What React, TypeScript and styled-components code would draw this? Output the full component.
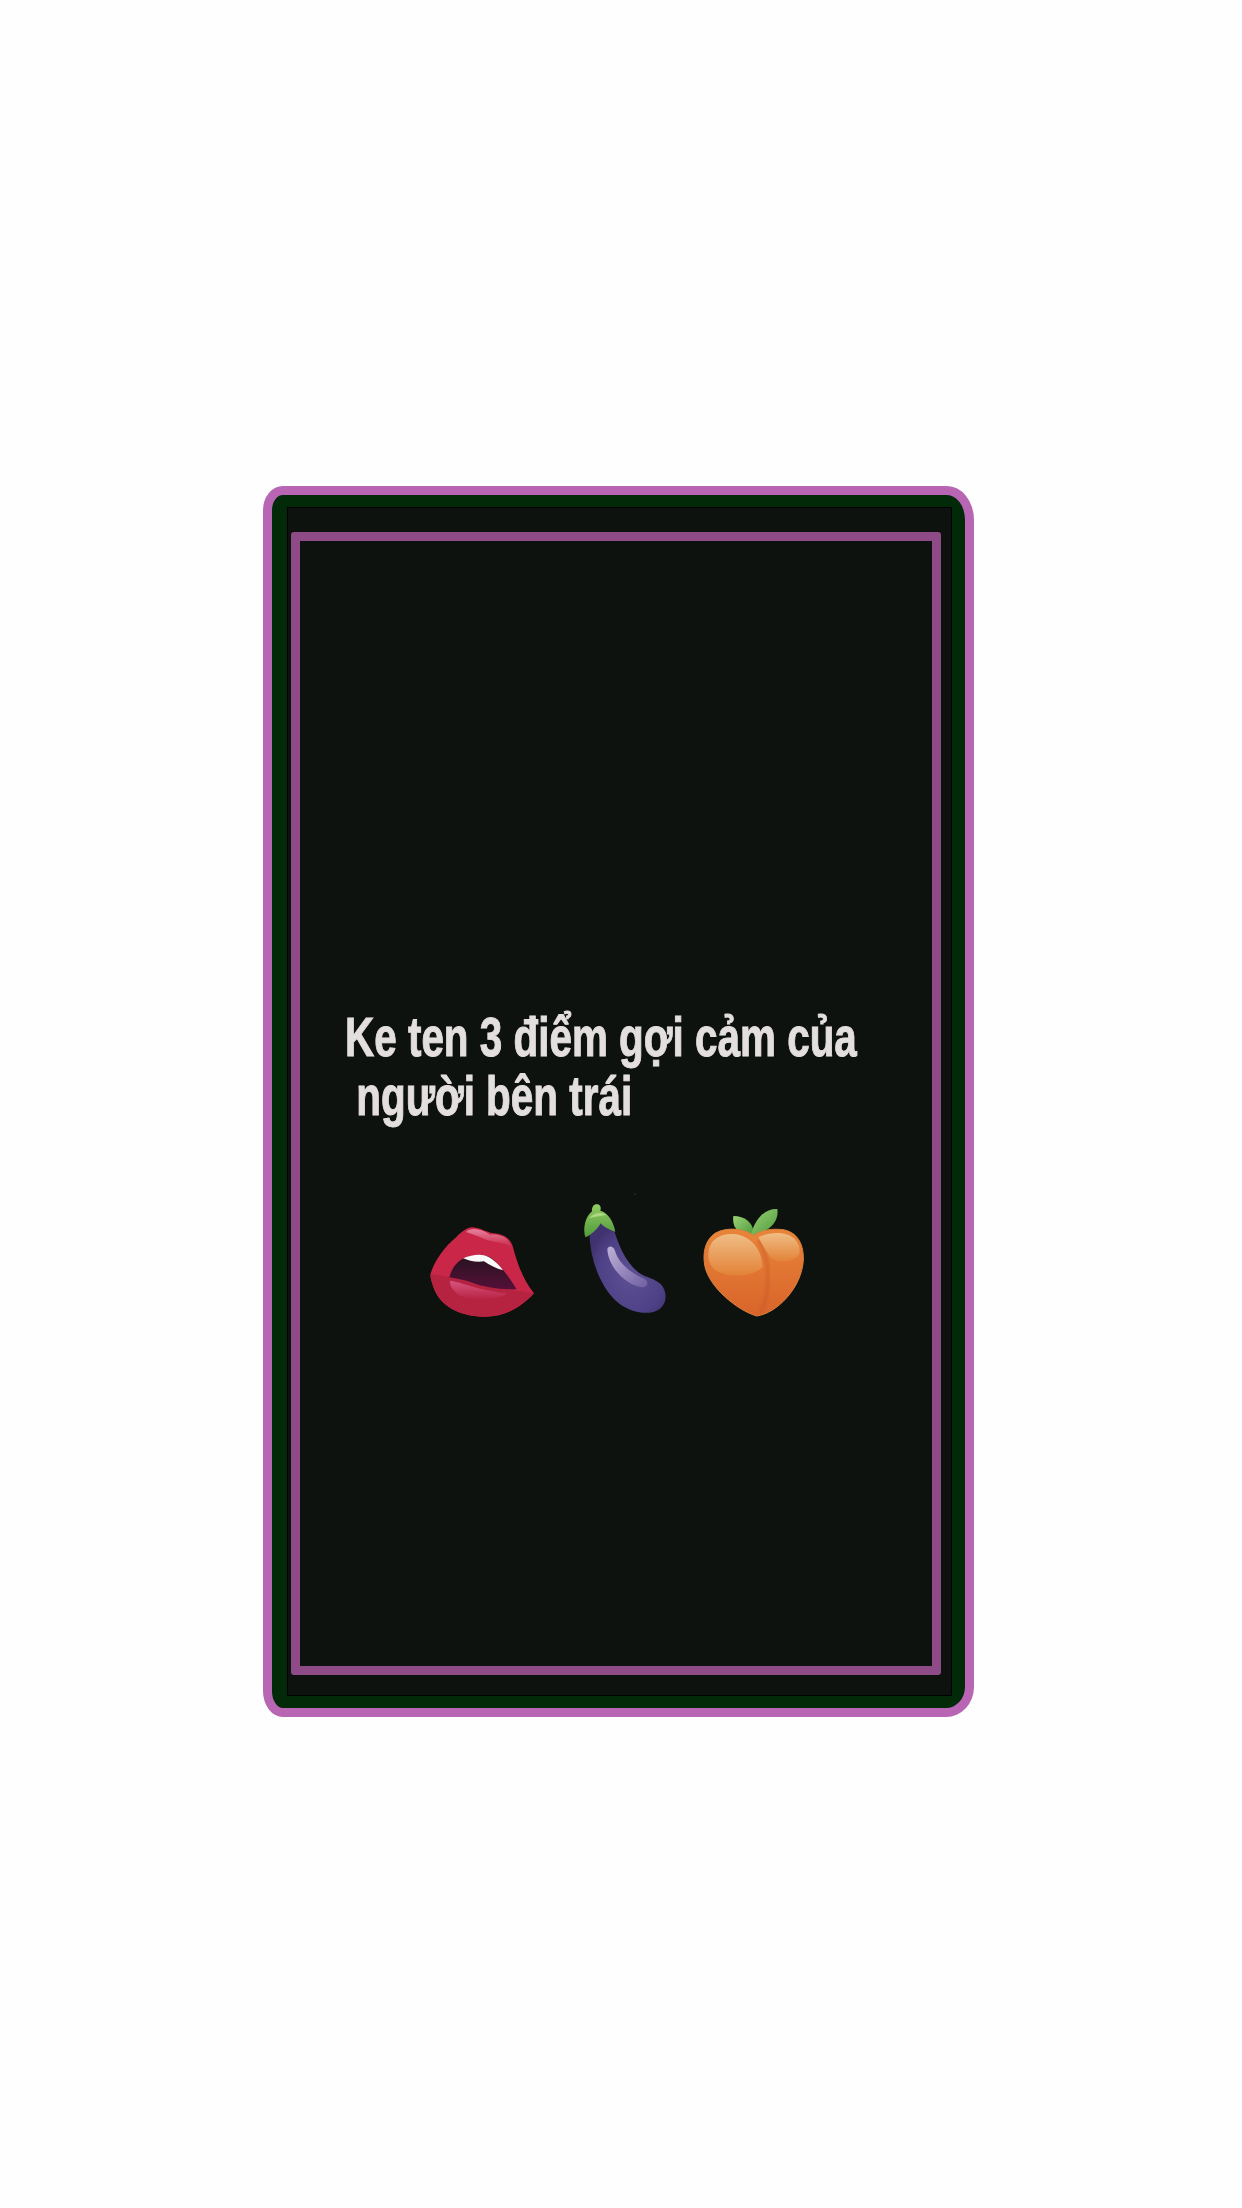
import * as React from "react";
import styled, { createGlobalStyle } from "styled-components";

const GlobalStyle = createGlobalStyle`
    html, body {
        margin: 0;
        padding: 0;
        background: #fefefe;
    }
`;

const Page = styled.div`
    width: 1242px;
    height: 2208px;
    padding: 486px 0 0 263px;
    box-sizing: border-box;
    overflow: hidden;
    background: #fefefe;
`;

const PhoneFrame = styled.div`
    width: 711px;
    height: 1231px;
    box-sizing: border-box;
    padding: 12px 13px 12px 15px;
    background: #022a08;
    border: 9px solid #b866b4;
    border-radius: 20px 27px 28px 20px / 24px 34px 30px 26px;
`;

const Screen = styled.div`
    height: 100%;
    box-sizing: border-box;
    padding: 24px 10px 20px 3px;
    background: #0d120e;
    border: 1px solid #000;
`;

const Card = styled.div`
    height: 100%;
    box-sizing: border-box;
    padding: 466px 0 0 45px;
    border: 9px solid #8e4b87;
    border-radius: 3px;
`;

// no brush font here, so Liberation Sans squeezed to the same line width
const Question = styled.div`
    font-family: "Liberation Sans", Arial, sans-serif;
    font-size: 56px;
    font-weight: 700;
    line-height: 59px;
    color: #e4dfdf;
    white-space: pre;
    -webkit-text-stroke: 1px #e4dfdf;
    transform: scaleX(0.722);
    transform-origin: left center;
`;

const EmojiRow = styled.div`
    display: flex;
    gap: 10px;
    margin: 65px 0 0 65px;
`;

const Emoji = styled.svg<{ $w: number }>`
    display: block;
    flex: none;
    width: ${props => props.$w}px;
    height: 150px;
`;

const Lips = () => (
    <Emoji $w={150} viewBox="0 0 450 450">
        <defs>
            <linearGradient id="mouth" x1="0" y1="0" x2="0" y2="1">
                <stop offset="0" stopColor="#24141f" />
                <stop offset="1" stopColor="#560f38" />
            </linearGradient>
            <linearGradient id="lipLow" x1="0" y1="0" x2="0" y2="1">
                <stop offset="0" stopColor="#d6557f" />
                <stop offset="1" stopColor="#b82342" />
            </linearGradient>
            <linearGradient id="lipTop" x1="0" y1="0" x2="0" y2="1">
                <stop offset="0" stopColor="#e5829d" />
                <stop offset="1" stopColor="#ca2748" />
            </linearGradient>
        </defs>
        <path
            d="M62 250 C75 210 105 170 135 145 C150 130 170 110 190 112 C210 114 228 126 250 130 C280 132 300 145 308 168 C318 205 335 265 372 310 C340 345 290 382 220 380 C150 378 90 350 70 290 C65 275 60 262 62 250 Z"
            fill="#ca2748"
        />
        <path
            d="M62 252 C90 258 140 260 190 282 C240 298 320 298 372 310 C340 345 290 382 220 380 C150 378 90 350 70 290 C65 275 60 262 62 252 Z"
            fill="#b52341"
        />
        <path
            d="M118 262 C125 235 140 215 162 205 C190 195 225 190 245 205 C275 230 300 265 320 298 C270 300 215 290 190 280 C165 270 140 265 118 262 Z"
            fill="url(#mouth)"
        />
        <path
            d="M160 205 C180 196 205 192 222 196 C245 202 265 222 279 241 C260 236 238 226 222 214 C200 218 175 212 160 205 Z"
            fill="#fafafa"
        />
        <path
            d="M120 272 C150 275 195 298 290 310 C285 322 225 335 175 325 C140 318 118 295 120 272 Z"
            fill="url(#lipLow)"
        />
        <path
            d="M168 126 C185 110 215 118 240 134 C265 132 295 138 305 172 C280 155 250 158 225 148 C205 138 185 132 168 126 Z"
            fill="url(#lipTop)"
        />
    </Emoji>
);

const Eggplant = () => (
    <Emoji $w={110} viewBox="0 0 330 450">
        <defs>
            <radialGradient id="eggBody" cx="0.55" cy="0.6" r="0.6">
                <stop offset="0" stopColor="#5d5092" />
                <stop offset="0.7" stopColor="#4f4187" />
                <stop offset="1" stopColor="#40326f" />
            </radialGradient>
            <linearGradient id="eggShine" x1="0" y1="0" x2="1" y2="1">
                <stop offset="0" stopColor="#bdb1d6" />
                <stop offset="1" stopColor="#6f5fa2" />
            </linearGradient>
            <linearGradient id="eggLeaf" x1="0" y1="0" x2="0" y2="1">
                <stop offset="0" stopColor="#94cc62" />
                <stop offset="1" stopColor="#4f9a3c" />
            </linearGradient>
        </defs>
        <circle cx="195" cy="12" r="2.5" fill="#3c3a3a" />
        <path
            d="M58 130 C60 200 85 280 135 330 C165 360 215 375 250 366 C290 355 298 310 272 282 C255 268 235 262 222 257 C175 235 145 170 128 105 L90 90 Z"
            fill="url(#eggBody)"
        />
        <path
            d="M112 178 C115 165 130 168 135 182 C145 220 185 250 225 268 C238 278 232 292 215 292 C170 285 115 235 112 178 Z"
            fill="url(#eggShine)"
        />
        <path
            d="M46 142 C38 115 45 82 66 64 C64 48 74 40 84 43 C92 46 94 54 91 62 C115 68 130 95 136 125 C120 120 102 112 92 100 C84 115 65 135 46 142 Z"
            fill="url(#eggLeaf)"
        />
        <path d="M58 85 C70 68 95 65 108 75 C90 78 72 80 58 85 Z" fill="#aed982" />
    </Emoji>
);

const Peach = () => (
    <Emoji $w={130} viewBox="0 0 390 450">
        <defs>
            <linearGradient id="peachBody" x1="0" y1="0" x2="0" y2="1">
                <stop offset="0" stopColor="#e8853a" />
                <stop offset="1" stopColor="#d9642a" />
            </linearGradient>
            <linearGradient id="peachShine" x1="0" y1="0" x2="0" y2="1">
                <stop offset="0" stopColor="#efbd85" />
                <stop offset="1" stopColor="#e38238" />
            </linearGradient>
            <linearGradient id="peachLeaf" x1="0" y1="0" x2="1" y2="1">
                <stop offset="0" stopColor="#9bd273" />
                <stop offset="1" stopColor="#4d9a3e" />
            </linearGradient>
            <filter id="soft">
                <feGaussianBlur stdDeviation="5" />
            </filter>
        </defs>
        <path d="M130 78 C165 78 188 98 190 124 L178 138 C140 128 126 110 130 78 Z" fill="url(#peachLeaf)" />
        <path d="M186 125 C198 82 228 55 262 57 C268 95 238 128 178 138 Z" fill="url(#peachLeaf)" />
        <path
            d="M190 136 C160 115 110 110 75 130 C45 150 38 190 44 225 C55 290 140 360 200 378 C260 370 335 295 340 210 C342 155 315 118 265 118 C235 116 210 124 190 136 Z"
            fill="url(#peachBody)"
            stroke="#d9803e"
            strokeWidth="3"
        />
        <path d="M205 150 C245 215 240 300 214 368" fill="none" stroke="#c2542a" strokeWidth="10" opacity="0.45" filter="url(#soft)" />
        <path
            d="M55 195 C55 150 90 130 130 132 C175 135 215 170 218 232 C190 258 120 268 75 240 C62 228 55 215 55 195 Z"
            fill="url(#peachShine)"
        />
        <path
            d="M205 142 C235 126 290 122 315 148 C330 165 332 185 325 198 C300 220 260 220 240 200 C225 180 215 160 205 142 Z"
            fill="url(#peachShine)"
        />
    </Emoji>
);

const App: React.FC = () => (
    <>
        <GlobalStyle />
        <Page>
            <PhoneFrame>
                <Screen>
                    <Card>
                        <Question>{"Ke ten 3 điểm gợi cảm của\n người bên trái"}</Question>
                        <EmojiRow>
                            <Lips />
                            <Eggplant />
                            <Peach />
                        </EmojiRow>
                    </Card>
                </Screen>
            </PhoneFrame>
        </Page>
    </>
);

export default App;
